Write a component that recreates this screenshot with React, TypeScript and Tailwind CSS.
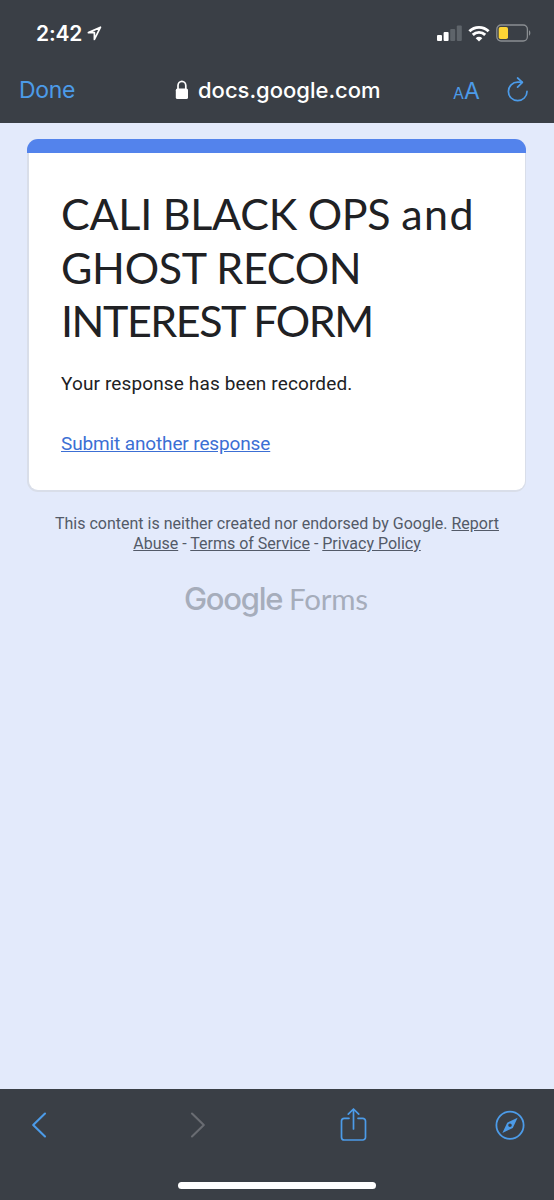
const StatusBar = () => {
  return (
    <div className="h-[66px] pl-[36px] pr-[22px] flex items-center justify-between text-white">
      <div className="flex items-center gap-[5px]">
        <span className="text-[21px] leading-none font-semibold tracking-[-0.2px] whitespace-nowrap">2:42</span>
        <svg width="15" height="15" viewBox="0 0 15 15" fill="none" stroke="currentColor" strokeWidth="1.7" strokeLinejoin="round">
          <path d="M13.5 1.2 1.4 6.6H7.4V13.4L13.5 1.2Z" />
        </svg>
      </div>
      <div className="flex items-center">
        <svg width="26" height="16" viewBox="0 0 26 16" fill="currentColor">
          <rect x="0" y="10" width="5" height="6" rx="1" />
          <rect x="6.6" y="7" width="5" height="9" rx="1" />
          <rect x="13.2" y="4" width="5" height="12" rx="1" fill="#5e646a" />
          <rect x="19.8" y="0.6" width="5" height="15.4" rx="1" fill="#5e646a" />
        </svg>
        <svg className="ml-[5px]" width="22" height="17" viewBox="0 0 22 17" fill="none" stroke="currentColor" strokeWidth="2.9">
          <path d="M1.4 6.3A13.6 13.6 0 0 1 20.6 6.3" />
          <path d="M4.8 9.9A8.8 8.8 0 0 1 17.2 9.9" />
          <path d="M11 16.4 7.7 13.2A4.6 4.6 0 0 1 14.3 13.2Z" fill="currentColor" stroke="none" />
        </svg>
        <svg className="ml-[6px]" width="36" height="18" viewBox="0 0 36 18" fill="none">
          <rect x="0.8" y="1" width="30.6" height="16" rx="4.2" stroke="#8a8e92" strokeWidth="1.3" />
          <rect x="2.7" y="3" width="9.3" height="12" rx="1.8" fill="#fdd535" />
          <path d="M33 6.3C34.8 7 34.8 11 33 11.7Z" fill="#8a8e92" />
        </svg>
      </div>
    </div>
  )
}

const NavBar = () => {
  return (
    <div className="h-[57px] pl-[19px] pr-[25px] pt-px flex items-start text-[#4c9be8]">
      <span className="w-[156px] text-[23px] leading-[46px] tracking-[-0.3px]">Done</span>
      <div className="w-[278px] flex items-center text-white">
        <svg className="mr-[9px]" width="14" height="20" viewBox="0 0 14 20" fill="none">
          <path d="M3 9V5.6a3.9 4.3 0 0 1 7.8 0V9" stroke="currentColor" strokeWidth="1.7" />
          <rect x="0.8" y="8.6" width="12.2" height="10.4" rx="1.6" fill="currentColor" />
        </svg>
        <span className="text-[22px] leading-[46px] font-medium whitespace-nowrap">docs.google.com</span>
      </div>
      <div className="w-[54px] pt-px leading-[46px] whitespace-nowrap">
        <span className="text-[16px]">A</span>
        <span className="text-[23px]">A</span>
      </div>
      <svg className="mt-[10px]" width="22" height="26" viewBox="0 0 22 26" fill="none" stroke="currentColor" strokeWidth="1.7" strokeLinecap="round" strokeLinejoin="round">
        <path d="M20 14.4A9.3 9.3 0 1 1 10.7 5.1H15" />
        <path d="M10.6 1 15.4 5.3 10.6 10.2" />
      </svg>
    </div>
  )
}

const ResponseCard = () => {
  return (
    <div className="ml-[27px] mr-[28px] h-[353px] rounded-[11px] bg-[#d9dee9] overflow-hidden flex flex-col">
      <div className="h-[14px] bg-[#5383ec]" />
      <div className="flex-1 ml-[2px] mr-px mb-[2px] rounded-b-[9px] bg-white pl-[32px] pt-[34px]">
        <h1 className="font-['Lato'] text-[43px] leading-[53.5px] text-[#202124] whitespace-nowrap">
          <span className="block tracking-[-0.25px]">
            CALI BLACK OPS <span className="tracking-[1.4px]">and</span>
          </span>
          <span className="block tracking-[-0.3px]">GHOST RECON</span>
          <span className="block tracking-[-1.45px]">INTEREST FORM</span>
        </h1>
        <p className="mt-[22px] font-['Roboto'] text-[19px] leading-[28px] tracking-[0.13px] text-[#202124]">
          Your response has been recorded.
        </p>
        <a href="#" className="mt-[32px] block font-['Roboto'] text-[19px] leading-[28px] tracking-[-0.13px] text-[#3c6fd4]">
          <span className="underline">Submit another response</span>
        </a>
      </div>
    </div>
  )
}

const Footer = () => {
  return (
    <div className="pt-[22px] font-['Roboto'] text-center">
      <p className="text-[16px] leading-[20px] text-[#535a68]">
        This content is neither created nor endorsed by Google. <a href="#" className="underline">Report</a>
        <br />
        <a href="#" className="underline">Abuse</a> - <a href="#" className="underline">Terms of Service</a> - <a href="#" className="underline">Privacy Policy</a>
      </p>
      <div className="mt-[25px] pl-[184px] flex items-baseline text-[#a6adbb] leading-[40px] whitespace-nowrap">
        <span className="w-[105px] text-left font-['Inter'] text-[31px] font-medium tracking-[-1.3px]">Google</span>
        <span className="font-['Lato'] text-[29.5px] tracking-[-0.2px]">Forms</span>
      </div>
    </div>
  )
}

const Toolbar = () => {
  return (
    <div className="h-[111px] bg-[#3a3f46] flex flex-col items-center text-[#4c9be8]">
      <div className="h-[72px] w-full pl-[31px] flex items-center">
        <svg width="16" height="26" viewBox="0 0 16 26" fill="none" stroke="currentColor" strokeWidth="2.1" strokeLinecap="round" strokeLinejoin="round">
          <path d="M14 1.5 2.2 13 14 24.5" />
        </svg>
        <svg className="ml-[143px]" width="16" height="26" viewBox="0 0 16 26" fill="none" stroke="#696c72" strokeWidth="2.1" strokeLinecap="round" strokeLinejoin="round">
          <path d="M2 1.5 13.8 13 2 24.5" />
        </svg>
        <svg className="ml-[134px]" width="28" height="34" viewBox="0 0 28 34" fill="none" stroke="currentColor" strokeWidth="1.7" strokeLinecap="round" strokeLinejoin="round">
          <path d="M9 10.3H4.3a2.8 2.8 0 0 0-2.8 2.8v16.1A2.8 2.8 0 0 0 4.3 32h18.4a2.8 2.8 0 0 0 2.8-2.8V13.1a2.8 2.8 0 0 0-2.8-2.8H18" />
          <path d="M13.5 21V1.3M8.3 6.2 13.5 1 18.7 6.2" />
        </svg>
        <svg className="ml-[127px]" width="30" height="30" viewBox="0 0 30 30" fill="none">
          <circle cx="15" cy="15.3" r="13.6" stroke="currentColor" strokeWidth="1.8" />
          <path fillRule="evenodd" fill="currentColor" d="M22.6 7.7 17.8 17.9 7.4 22.9 12.2 12.7ZM15 13.5a1.8 1.8 0 1 0 0 3.6 1.8 1.8 0 0 0 0-3.6Z" />
        </svg>
      </div>
      <div className="mt-[21px] h-[7px] w-[198px] rounded-full bg-white" />
    </div>
  )
}

export default function App() {
  return (
    <div className="w-[554px] h-[1200px] flex flex-col bg-[#e3eafb] overflow-hidden font-['Inter']">
      <header className="h-[123px] shrink-0 bg-[#3a3f46]">
        <StatusBar />
        <NavBar />
      </header>
      <main className="flex-1 pt-[16px]">
        <ResponseCard />
        <Footer />
      </main>
      <Toolbar />
    </div>
  )
}
